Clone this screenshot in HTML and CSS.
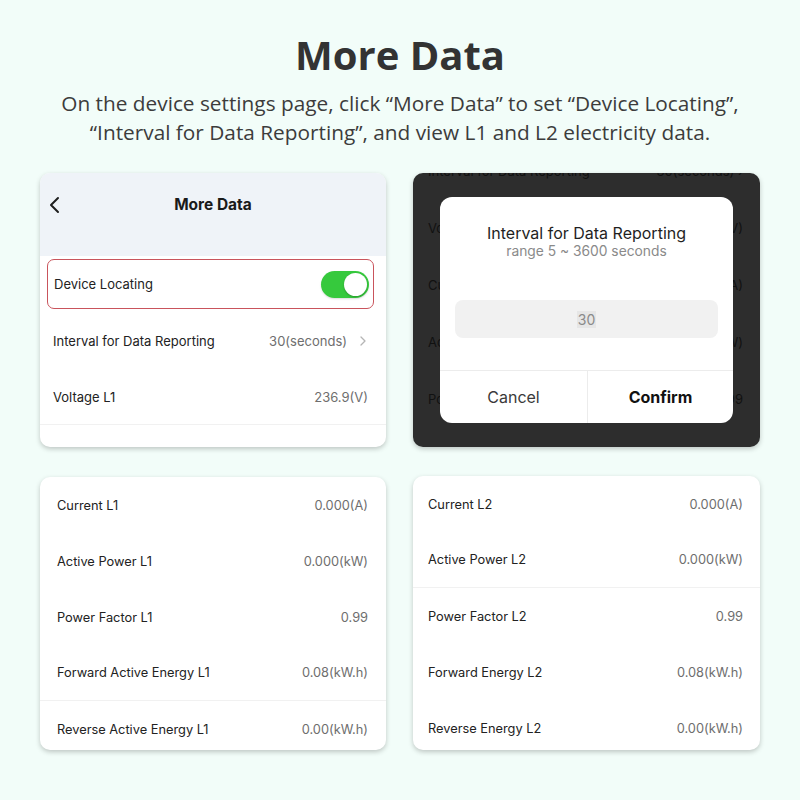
FILE: index.html
```html
<!DOCTYPE html>
<html lang="en">
<head>
<meta charset="utf-8">
<title>More Data</title>
<link rel="stylesheet" href="styles.css">
</head>
<body>
<header class="intro">
  <h1 class="title">More Data</h1>
  <p class="desc">On the device settings page, click “More Data” to set “Device Locating”,<br>“Interval for Data Reporting”, and view L1 and L2 electricity data.</p>
</header>
<main class="grid">
  <section class="card card-top">
    <div class="nav">
      <svg class="back" width="12" height="18" viewBox="0 0 12 18"><polyline points="9,2 2,9 9,16" fill="none" stroke="#1f1f1f" stroke-width="2" stroke-linecap="round" stroke-linejoin="round"/></svg>
      <span class="nav-title">More Data</span>
    </div>
    <div class="locating">
      <span class="label">Device Locating</span>
      <span class="toggle"><span class="knob"></span></span>
    </div>
    <div class="row row-a">
      <span class="label">Interval for Data Reporting</span>
      <span class="value">30(seconds)<svg class="chev" width="8" height="12" viewBox="0 0 8 12"><polyline points="2,2 6,6 2,10" fill="none" stroke="#b5b5b5" stroke-width="1.3" stroke-linecap="round" stroke-linejoin="round"/></svg></span>
    </div>
    <div class="row row-a divided">
      <span class="label">Voltage L1</span>
      <span class="value">236.9(V)</span>
    </div>
  </section>

  <section class="card card-dark">
    <div class="dim-list">
      <div class="row row-d"><span class="label">Interval for Data Reporting</span><span class="value">30(seconds) ›</span></div>
      <div class="row row-d"><span class="label">Voltage L1</span><span class="value">236.9(V)</span></div>
      <div class="row row-d"><span class="label">Current L1</span><span class="value">0.000(A)</span></div>
      <div class="row row-d"><span class="label">Active Power L1</span><span class="value">0.000(kW)</span></div>
      <div class="row row-d"><span class="label">Power Factor L1</span><span class="value">0.99</span></div>
    </div>
    <div class="dialog">
      <div class="dlg-title">Interval for Data Reporting</div>
      <div class="dlg-sub">range 5 ~ 3600 seconds</div>
      <div class="dlg-input"><span class="sel">30</span></div>
      <div class="dlg-actions">
        <span class="btn">Cancel</span>
        <span class="btn btn-strong">Confirm</span>
      </div>
    </div>
  </section>

  <section class="card card-list left">
    <div class="row row-b"><span class="label">Current L1</span><span class="value">0.000(A)</span></div>
    <div class="row row-b"><span class="label">Active Power L1</span><span class="value">0.000(kW)</span></div>
    <div class="row row-b"><span class="label">Power Factor L1</span><span class="value">0.99</span></div>
    <div class="row row-b divided"><span class="label">Forward Active Energy L1</span><span class="value">0.08(kW.h)</span></div>
    <div class="row row-b"><span class="label">Reverse Active Energy L1</span><span class="value">0.00(kW.h)</span></div>
  </section>

  <section class="card card-list right">
    <div class="row row-b"><span class="label">Current L2</span><span class="value">0.000(A)</span></div>
    <div class="row row-b divided"><span class="label">Active Power L2</span><span class="value">0.000(kW)</span></div>
    <div class="row row-b"><span class="label">Power Factor L2</span><span class="value">0.99</span></div>
    <div class="row row-b"><span class="label">Forward Energy L2</span><span class="value">0.08(kW.h)</span></div>
    <div class="row row-b"><span class="label">Reverse Energy L2</span><span class="value">0.00(kW.h)</span></div>
  </section>
</main>
</body>
</html>
```

FILE: styles.css
```css
* { box-sizing: border-box; }
html, body { margin: 0; padding: 0; }
body {
  width: 800px;
  height: 800px;
  background: #f2fdf9;
  font-family: "Open Sans", "Liberation Sans", sans-serif;
  overflow: hidden;
}
.intro { text-align: center; padding-top: 30px; }
.title {
  margin: 0;
  font-size: 40px;
  line-height: 50px;
  font-weight: 700;
  color: #333333;
}
.desc {
  margin: 9px 0 0;
  font-size: 20.8px;
  line-height: 29px;
  color: #3c3c3c;
}
.grid {
  display: grid;
  grid-template-columns: 346px 347px;
  grid-template-rows: 274px 273px;
  column-gap: 27px;
  row-gap: 30px;
  margin: 26px 0 0 40px;
}
.card {
  background: #ffffff;
  border-radius: 10px;
  box-shadow: 0 2px 5px rgba(0, 0, 0, 0.22);
  overflow: hidden;
  font-family: Inter, "Liberation Sans", sans-serif;
  font-size: 13px;
  color: #222222;
}
.card-list { font-size: 12.8px; }
.row {
  display: flex;
  align-items: center;
  justify-content: space-between;
}
.label { color: #222222; }
.value { color: #6e6e6e; display: flex; align-items: center; }
.divided { border-bottom: 1px solid #f1f1f1; }

/* top-left card */
.nav {
  height: 83px;
  background: #eff3f8;
  display: flex;
  align-items: flex-start;
  justify-content: center;
  position: relative;
  padding-top: 22px;
}
.back { position: absolute; left: 9px; top: 23px; }
.nav-title { font-size: 15.5px; font-weight: 700; color: #1a1a1a; line-height: 20px; }
.locating {
  margin: 3px 12px 0 7px;
  height: 50px;
  border: 1px solid #c9545c;
  border-radius: 7px;
  display: flex;
  align-items: center;
  justify-content: space-between;
  padding: 0 4px 0 6px;
}
.toggle {
  width: 48px;
  height: 27px;
  border-radius: 14px;
  background: #36c93d;
  display: flex;
  align-items: center;
  justify-content: flex-end;
  padding-right: 2px;
  box-shadow: 0 1px 2px rgba(0,0,0,0.15);
}
.knob {
  width: 23px;
  height: 23px;
  border-radius: 50%;
  background: #ffffff;
  box-shadow: 0 1px 2px rgba(0,0,0,0.25);
}
.row-a { height: 56px; padding: 0 18px 0 13px; }
.locating + .row-a { margin-top: 4px; }
.chev { margin-left: 12px; margin-right: 1px; }

/* dark card */
.card-dark {
  background: #2d2d2d;
  position: relative;
}
.dim-list { margin-top: -31px; }
.row-d { height: 57px; padding: 0 17px 0 15px; }
.row-d .label, .row-d .value { color: #111111; }
.dialog {
  position: absolute;
  left: 27px;
  top: 24px;
  width: 293px;
  height: 226px;
  background: #ffffff;
  border-radius: 12px;
  text-align: center;
  display: flex;
  flex-direction: column;
}
.dlg-title { margin-top: 26px; font-size: 16px; line-height: 21px; color: #1f1f1f; }
.dlg-sub { font-size: 13.8px; line-height: 17px; color: #8a8a8a; margin-top: -1px; }
.dlg-input {
  margin: 40px 15px 0;
  height: 38px;
  border-radius: 8px;
  background: #f1f1f1;
  display: flex;
  align-items: center;
  justify-content: center;
  font-size: 14px;
  color: #8a8a8a;
}
.sel { background: #e6e6e6; padding: 0 1px; }
.dlg-actions {
  margin-top: auto;
  height: 53px;
  border-top: 1px solid #ececec;
  display: grid;
  grid-template-columns: 147px 1fr;
}
.btn {
  display: flex;
  align-items: center;
  justify-content: center;
  font-size: 16px;
  color: #3a3a3a;
}
.btn + .btn { border-left: 1px solid #ececec; }
.btn-strong { font-weight: 700; color: #111111; }

/* bottom cards */
.row-b { height: 56px; }
.left .row-b { padding: 0 18px 0 17px; }
.right .row-b { padding: 0 17px 0 15px; }
.right { margin-top: -1px; height: 274px; }
```
